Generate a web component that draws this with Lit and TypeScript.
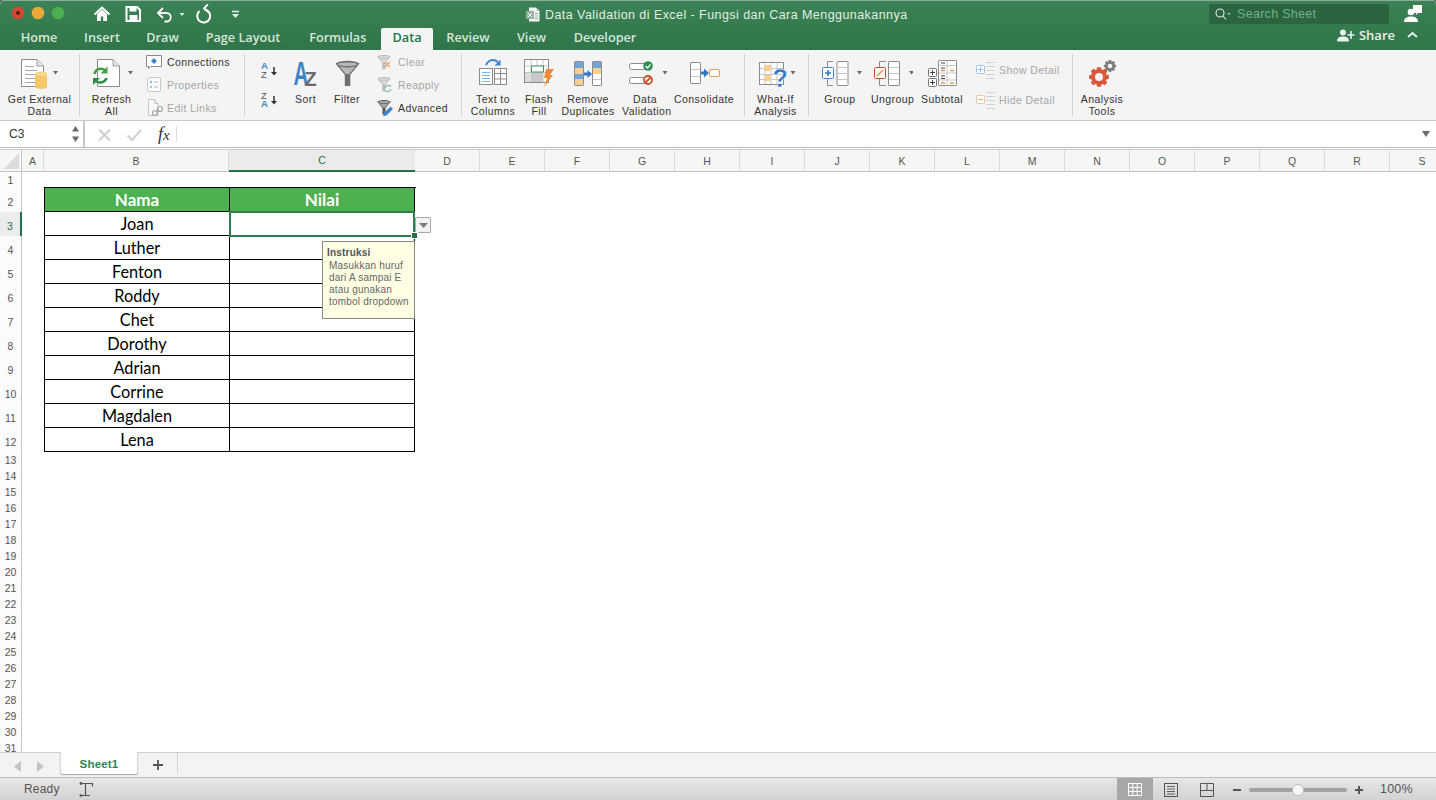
import { LitElement, html, css, svg } from "lit";
import { customElement } from "lit/decorators.js";

const GREY = "#8c8c8c";
const caret = (x: number, y: number, c = "#6a6a6a") => svg`<path d="M${x} ${y}h5l-2.5 3.6z" fill="${c}"/>`;
const doc = (x: number, y: number, w: number, h: number, f: number, c = GREY, fill = "#fff") => svg`
  <path d="M${x + .5} ${y + .5}H${x + w - f}L${x + w - .5} ${y + f}V${y + h - .5}H${x + .5}Z" fill="${fill}" stroke="${c}"/>
  <path d="M${x + w - f} ${y + .5}V${y + f}H${x + w - .5}" fill="#e6e6e6" stroke="${c}" stroke-width=".8"/>`;
const gear = (cx: number, cy: number, r: number, hole: number, fill: string, teeth = 8) => {
  let d = "";
  const rin = r * 0.74;
  for (let i = 0; i < teeth; i++) {
    const a = (i / teeth) * Math.PI * 2;
    const s = Math.PI / teeth;
    const p = (ang: number, rad: number) => `${(cx + Math.cos(ang) * rad).toFixed(2)} ${(cy + Math.sin(ang) * rad).toFixed(2)}`;
    d += `${i ? "L" : "M"}${p(a - s * 0.95, rin)}L${p(a - s * 0.45, r)}L${p(a + s * 0.45, r)}L${p(a + s * 0.95, rin)}`;
  }
  d += "Z";
  return svg`<path d="${d}" fill="${fill}"/><circle cx="${cx}" cy="${cy}" r="${hole}" fill="#f4f4f4"/>`;
};
const funnel = (x: number, y: number, s: number, op = 1, c1 = "#b9b9b9", c2 = "#6e6e6e") => svg`
  <g opacity="${op}">
    <path d="M${x} ${y + 1.5 * s}C${x + 3 * s} ${y - .6 * s} ${x + 11 * s} ${y - .6 * s} ${x + 14 * s} ${y + 1.5 * s}L${x + 8.6 * s} ${y + 8 * s}V${y + 14.5 * s}H${x + 5.4 * s}V${y + 8 * s}Z" fill="${c2}"/>
    <ellipse cx="${x + 7 * s}" cy="${y + 1.9 * s}" rx="${5.6 * s}" ry="${1 * s}" fill="${c1}"/>
    <path d="M${x + 2.4 * s} ${y + 3.2 * s}Q${x + 7 * s} ${y + 4.4 * s} ${x + 11.6 * s} ${y + 3.2 * s}L${x + 8 * s} ${y + 7.6 * s}H${x + 6 * s}Z" fill="${c1}"/>
  </g>`;
const colBlock = (x: number) => svg`
  <rect x="${x + .5}" y="61.5" width="11" height="24" fill="#fff" stroke="${GREY}" rx=".6"/>
  <path d="M${x + 1} 67.5h10M${x + 1} 73.5h10M${x + 1} 79.5h10" stroke="#c6c6c6"/>`;

type Big = { x: number; w: number; label: string[]; icon: any };
type Small = { label: string; off?: boolean; icon: any };

const bigs: Record<string, Big> = {
  ext: { x: 0, w: 79, label: ["Get External", "Data"], icon: svg`
    ${doc(21, 59, 23, 28, 7)}
    <path d="M25 66.500h9M25 70.500h12M25 74.500h10M25 78.500h10M25 82.500h10" stroke="#a8a8a8"/>
    <path d="M35 74c0-3 12-3 12 0v13c0 2.500-12 2.500-12 0z" fill="#f6c667"/>
    <ellipse cx="41" cy="74" rx="6" ry="1.800" fill="#f9d98f"/>
    <path d="M38 78h.8M42 80h.8M39 83h.8M44 84h.8M44 77h.8" stroke="#fbe7b6"/>
    ${caret(53, 71)}` },
  refresh: { x: 80, w: 63, label: ["Refresh", "All"], icon: svg`
    ${doc(97, 59, 23, 28, 7)}
    <path d="M94.500 74a6.500 6 0 0 1 11.500-3" fill="none" stroke="#43a047" stroke-width="2.600"/>
    <path d="M107.500 66.500v7h-7z" fill="#43a047"/>
    <path d="M106.500 78a6.500 6 0 0 1-10.500 3" fill="none" stroke="#2e8b44" stroke-width="2.600"/>
    <path d="M93 85v-7h7z" fill="#2e8b44"/>
    ${caret(128, 71)}` },
  sort: { x: 285, w: 41, label: ["Sort"], icon: svg`
    <text transform="translate(293.500 85) scale(.62 1)" font-family="Liberation Sans" font-weight="700" font-size="33" fill="#3f83c9">A</text>
    <text x="304.500" y="85.500" font-family="Liberation Sans" font-weight="700" font-size="20" fill="#6b6b6b">Z</text>` },
  filter: { x: 326, w: 42, label: ["Filter"], icon: funnel(335.500, 61, 1.72) },
  ttc: { x: 462, w: 62, label: ["Text to", "Columns"], icon: svg`
    <path d="M486 65c3-6 8-6 12-3" fill="none" stroke="#3f83c9" stroke-width="2"/>
    <path d="M500.500 59.500v6h-6z" fill="#3f83c9"/>
    <rect x="479.500" y="68.500" width="13" height="16" fill="#fff" stroke="${GREY}"/>
    <path d="M482 72.500h8M482 75.500h8M482 78.500h8M482 81.500h8" stroke="#7fb2e5"/>
    <rect x="494.500" y="68.500" width="12" height="16" fill="#fff" stroke="${GREY}"/>
    <path d="M495 73.500h11M495 79h11M500.500 69v15" stroke="${GREY}"/>` },
  flash: { x: 524, w: 30, label: ["Flash", "Fill"], icon: svg`
    <rect x="524.500" y="59.500" width="24" height="23" fill="#fff" stroke="${GREY}"/>
    <path d="M525 66h23M525 72.500h23M531 60v22M537 60v22M543 60v22" stroke="#c6c6c6"/>
    <rect x="525" y="73" width="6" height="9" fill="#dcdcdc"/><rect x="531" y="73" width="12" height="9" fill="#c8c8c8"/>
    <rect x="531.500" y="66" width="12" height="6" fill="#fff" stroke="#3c9a5f"/>
    <path d="M546 69h8l-4 6h3l-9 12 3-9h-3z" fill="#ee8b3a"/>` },
  dup: { x: 554, w: 68, label: ["Remove", "Duplicates"], icon: svg`
    <rect x="574.500" y="61.500" width="9" height="24" fill="#fff" stroke="${GREY}" rx=".6"/>
    <rect x="575" y="62" width="8" height="6" fill="#6ea6dc"/><rect x="575" y="68" width="8" height="6" fill="#f8cf8f"/>
    <rect x="575" y="74" width="8" height="5.500" fill="#6ea6dc"/><rect x="575" y="79.500" width="8" height="5.500" fill="#f8cf8f"/>
    <path d="M584 72.500h3.500v-2.500l4.500 4-4.500 4v-2.500H584z" fill="#2f78c4"/>
    <rect x="592.500" y="61.500" width="9" height="24" fill="#fff" stroke="${GREY}" rx=".6"/>
    <rect x="593" y="62" width="8" height="6" fill="#6ea6dc"/><rect x="593" y="68" width="8" height="6" fill="#f8cf8f"/>
    <path d="M593 79.500h8" stroke="#c6c6c6"/>` },
  dv: { x: 622, w: 46, label: ["Data", "Validation"], icon: svg`
    <rect x="629.500" y="63.500" width="17" height="6" rx="2" fill="#fff" stroke="${GREY}"/>
    <rect x="629.500" y="77.500" width="17" height="6" rx="2" fill="#fff" stroke="${GREY}"/>
    <circle cx="648" cy="66" r="4.800" fill="#2f8f4e"/>
    <path d="M645.500 66l2 2 3-3.500" fill="none" stroke="#fff" stroke-width="1.300"/>
    <circle cx="648" cy="80" r="4" fill="#fff" stroke="#cf4a2c" stroke-width="1.800"/>
    <path d="M645.500 82.500l5-5" stroke="#cf4a2c" stroke-width="1.800"/>
    ${caret(662.500, 71)}` },
  cons: { x: 668, w: 72, label: ["Consolidate"], icon: svg`
    <rect x="690.500" y="62.500" width="10" height="21" fill="#fff" stroke="${GREY}" rx=".6"/>
    <path d="M691 69.500h9M691 76.500h9" stroke="#c6c6c6"/>
    <path d="M701 71.500h3v-3l5 4.500-5 4.500v-3h-3z" fill="#2f78c4"/>
    <rect x="709.500" y="69.500" width="10" height="7" rx="1.500" fill="#fff" stroke="#ea9a52"/>` },
  whatif: { x: 745, w: 61, label: ["What-If", "Analysis"], icon: svg`
    <rect x="759.500" y="62.500" width="24" height="22" fill="#fff" stroke="${GREY}"/>
    <path d="M760 68.500h23M760 74.500h23M760 79.500h23M765 63v21M771 63v21M777 63v21" stroke="#c6c6c6"/>
    <rect x="764.500" y="65" width="6" height="6" fill="#f8cf8f"/><rect x="764.500" y="75" width="6" height="6" fill="#f8cf8f"/>
    <text x="772.500" y="86.500" font-family="Liberation Sans" font-weight="700" font-size="25" fill="#2f78c4" stroke="#f4f4f4" stroke-width=".4">?</text>
    ${caret(790.500, 71)}` },
  group: { x: 809, w: 62, label: ["Group"], icon: svg`
    <path d="M833 61.500h-5.500V67M827.500 79v6.500H833" fill="none" stroke="${GREY}"/>
    <rect x="822.500" y="67.500" width="11" height="11" rx="1" fill="#fff" stroke="#3f83c9"/>
    <path d="M825 73h6M828 70v6" stroke="#2f78c4" stroke-width="1.600"/>
    ${colBlock(836.500)}
    ${caret(857, 71)}` },
  ungroup: { x: 871, w: 42, label: ["Ungroup"], icon: svg`
    <path d="M886 61.500h-6.500V67M879.500 79v6.500H886" fill="none" stroke="${GREY}"/>
    <rect x="874.500" y="67.500" width="11" height="11" rx="1" fill="#fff" stroke="#cf4a2c"/>
    <path d="M877 76l6-6" stroke="#ee8b3a" stroke-width="1.400"/>
    ${colBlock(888)}
    ${caret(909, 71)}` },
  subtotal: { x: 913, w: 58, label: ["Subtotal"], icon: svg`
    <rect x="938.500" y="60.500" width="18" height="25" rx=".6" fill="#fff" stroke="${GREY}"/>
    <path d="M939 65.500h17M939 73h17M939 80h17M947 61v25" stroke="#c6c6c6"/>
    <path d="M941 63h4M941 68h4M941 76h4M941 78.500h4" stroke="#444"/>
    <path d="M941 70.500h4M950 70.500h4M941 83h4M950 83h4" stroke="#ee9a4a" stroke-width="1.400"/>
    <rect x="928.500" y="68.500" width="8" height="8" rx="1" fill="#fff" stroke="#777"/>
    <rect x="928.500" y="78.500" width="8" height="8" rx="1" fill="#fff" stroke="#777"/>
    <path d="M930 72.500h5M932.500 70v5M930 82.500h5M932.500 80v5" stroke="#444"/>` },
  tools: { x: 1073, w: 58, label: ["Analysis", "Tools"], icon: svg`
    ${gear(1099, 77, 10, 4, "#d9583a")}
    ${gear(1110, 66, 6.200, 2.300, "#7d7d7d")}` },
};

const smallRows: Record<string, Small[]> = {
  data: [
    { label: "Connections", icon: svg`
      <path d="M146.500 5.500h15v11h-11l-2 2v-2h-2z" fill="#fff" stroke="#8a8a8a"/>
      <path d="M154 8l3 3-3 3-3-3z" fill="#3f83c9"/>` },
    { label: "Properties", off: true, icon: svg`
      <rect x="147.500" y="4.500" width="13" height="14" rx="1" fill="#fafafa" stroke="#c8c8c8"/>
      <path d="M150 9h2" stroke="#8fbbe8" stroke-width="2"/><path d="M154 9h4M154 14h4" stroke="#bdbdbd"/><path d="M150 14h2" stroke="#bdbdbd" stroke-width="2"/>` },
    { label: "Edit Links", off: true, icon: svg`
      <path d="M148.500 3.500h6l3.500 4v12h-9.500z" fill="#fafafa" stroke="#c4c4c4"/>
      <path d="M154.500 3.500v4h3.500" fill="none" stroke="#c4c4c4"/>
      <circle cx="155" cy="17" r="2.500" fill="#f4f4f4" stroke="#a6a6a6" stroke-width="1.200"/>
      <circle cx="160" cy="13" r="2.500" fill="#f4f4f4" stroke="#a6a6a6" stroke-width="1.200"/>
      <path d="M156 16l3-2.500" stroke="#a6a6a6" stroke-width="1.200"/>` },
  ],
  filter: [
    { label: "Clear", off: true, icon: svg`${funnel(377, 5, .98, .42)}<path d="M385 12l5 5M390 12l-5 5" stroke="#e8a468" stroke-width="1.300"/>` },
    { label: "Reapply", off: true, icon: svg`${funnel(377, 4, .98, .42)}<path d="M385 15a3.500 3.500 0 0 1 6-1.500M391 16a3.500 3.500 0 0 1-6 1.500" fill="none" stroke="#85c2a0" stroke-width="1.200"/>` },
    { label: "Advanced", icon: svg`${funnel(377, 4, 1, 1, "#a8a8a8", "#5f5f5f")}<path d="M384 17l6.500-6.500 2.500 2.500-6.500 6.500-3.300.8z" fill="#3f83c9"/>` },
  ],
};

const detail: Small[] = [
  { label: "Show Detail", off: true, icon: svg`
    <rect x="976.500" y="10.500" width="8" height="8" rx="1" fill="#fff" stroke="#9cc3ea"/>
    <path d="M978 14.500h5M980.500 12v5" stroke="#9cc3ea"/>
    <path d="M986 7.500h9M986 11.500h9M986 15.500h9M986 19.500h9M986 23.500h9" stroke="#d2d2d2"/>` },
  { label: "Hide Detail", off: true, icon: svg`
    <rect x="976.500" y="10.500" width="8" height="8" rx="1" fill="#fff" stroke="#f0c49a"/>
    <path d="M978 14.500h5" stroke="#eab182"/>
    <path d="M986 7.500h9M986 11.500h9M986 15.500h9M986 19.500h9M986 23.500h9" stroke="#d2d2d2"/>` },
];

const tabs: [string, number][] = [["Home", 63], ["Insert", 63], ["Draw", 58], ["Page Layout", 103], ["Formulas", 86.500], ["Data", 52], ["Review", 70], ["View", 57], ["Developer", 90]];
const columns: [string, number][] = [["A", 22], ["B", 185], ["C", 186], ...("DEFGHIJKLMNOPQRS".split("").map((c) => [c, 65] as [string, number]))];
const people = ["Joan", "Luther", "Fenton", "Roddy", "Chet", "Dorothy", "Adrian", "Corrine", "Magdalen", "Lena"];

@customElement("app-root")
export class AppRoot extends LitElement {
  static styles = css`
    :host { display: block; width: 1436px; height: 800px; overflow: hidden; background: #5d6d64; font-family: "Liberation Sans", Arial, sans-serif; color: #333; }
    .win { display: flex; flex-direction: column; height: 800px; overflow: hidden; border-radius: 5px 5px 0 0; background: #fff; }
    svg { display: block; flex: none; }

    .head { height: 50px; flex: none; background: linear-gradient(#3b8256, #2f7549); display: flex; flex-direction: column; border-top: 1px solid #8fa99a; box-sizing: border-box; }
    .titlebar { height: 27px; flex: none; position: relative; display: flex; align-items: center; }
    .tb-icons { width: 240px; height: 27px; flex: none; }
    .title { flex: 1; display: flex; align-items: center; gap: 5px; padding-left: 286px; color: #e2eee6; font-size: 12.5px; letter-spacing: .44px; white-space: nowrap; }
    .search { width: 180px; height: 20px; flex: none; box-sizing: border-box; margin-top: -2px; background: #2a6540; border-radius: 3px; display: flex; align-items: center; gap: 6px; padding-left: 6px; color: #74b08c; font-size: 12.5px; letter-spacing: .3px; }
    .user { margin-left: 15px; margin-right: 14px; margin-top: -4px; }
    .tabline { height: 22px; flex: none; display: flex; padding-left: 7.5px; font-family: "Open Sans", sans-serif; font-size: 12.7px; font-weight: 600; color: #d6e6dc; }
    .tab { display: flex; align-items: center; justify-content: center; white-space: nowrap; flex: none; box-sizing: border-box; padding-bottom: 4px; }
    .tab.on { background: #f4f4f4; color: #217346; border-radius: 2px 2px 0 0; }
    .share { margin-left: auto; align-self: flex-start; height: 14px; display: flex; align-items: center; gap: 4px; padding-right: 18px; }
    .share span { font-size: 13px; color: #e8f1eb; }

    .ribbon { height: 70px; flex: none; background: #f4f4f4; border-bottom: 1px solid #c9c9c9; box-sizing: content-box; display: flex; align-items: flex-start; font-size: 10.5px; letter-spacing: .42px; color: #333; }
    .sep { width: 1px; height: 62px; margin-top: 4px; background: #d2d2d2; flex: none; }
    .big { flex: none; display: flex; flex-direction: column; }
    .lbl { margin-top: 1px; line-height: 12px; text-align: center; white-space: nowrap; }
    .pad { flex: none; }
    .stack { flex: none; display: flex; flex-direction: column; margin-top: 0; }
    .row { display: flex; align-items: center; height: 23px; white-space: nowrap; }
    .stack.tall { margin-top: 5px; }
    .stack.tall .row { height: 30px; }
    .off { color: #a6a6a6; }

    .fbar { height: 26px; flex: none; display: flex; background: #fff; border-bottom: 1px solid #bdbdbd; }
    .name { width: 85px; flex: none; box-sizing: border-box; padding-left: 9px; display: flex; align-items: center; font-size: 12px; color: #333; position: relative; border-right: 2px solid #c8c8c8; }
    .spin { margin-left: auto; margin-right: 3px; }
    .fx-icons { flex: none; }
    .fx { flex: none; width: 18px; padding: 3px 0 0 3px; font-family: "Liberation Serif", serif; font-style: italic; font-size: 18px; color: #333; }
    .fx span { font-size: 15px; }
    .fx-sep { width: 1px; height: 16px; margin-top: 5px; background: #dedede; flex: none; }
    .finput { flex: 1; display: flex; align-items: center; justify-content: flex-end; padding-right: 5px; }

    .cols { height: 24px; flex: none; box-sizing: border-box; border-top: 1px solid #fff; box-shadow: inset 0 1px 0 #c9c9c9; display: flex; background: #f6f6f6; border-bottom: 1px solid #c4c4c4; padding-top: 1px; font-size: 10.5px; color: #555; }
    .corner { width: 22px; flex: none; border-right: 1px solid #c4c4c4; box-sizing: border-box; }
    .col { flex: none; box-sizing: border-box; display: flex; align-items: center; justify-content: center; border-right: 1px solid #dcdcdc; }
    .col.on { color: #217346; background: #ebebeb; border-bottom: 2px solid #217346; margin-bottom: -1px; border-right: 0; }

    .sheet { flex: 1; min-height: 0; display: flex; overflow: hidden; }
    .rows { width: 22px; flex: none; box-sizing: border-box; border-right: 1px solid #c4c4c4; background: #fbfbfb; font-size: 10.5px; color: #555; }
    .rn { display: flex; align-items: center; justify-content: center; height: 16px; box-sizing: border-box; }
    .rn.t { height: 24px; padding-top: 4px; }
    .rn.on { color: #217346; background: #ececec; border-right: 2px solid #217346; margin-right: -1px; }
    .cells { flex: 1; position: relative; }
    .table { margin: 15px 0 0 22px; width: 371px; display: grid; grid-template-columns: 185px 185px; border-left: 1px solid #000; border-top: 1px solid #000; font-family: Lato, sans-serif; font-size: 16.3px; color: #000; }
    .c { height: 24px; box-sizing: border-box; border-right: 1px solid #000; border-bottom: 1px solid #000; display: flex; align-items: center; justify-content: center; }
    .c.h { background: #4eb151; color: #fff; font-weight: 700; font-size: 17px; }
    .sel { position: absolute; left: 207px; top: 39px; width: 186px; height: 26px; box-sizing: border-box; border: 2px solid #2f7d4f; }
    .handle { position: absolute; left: 390px; top: 61px; width: 5px; height: 5px; background: #217346; border: 1px solid #fff; box-sizing: content-box; margin: -1px 0 0 -1px; }
    .dd { position: absolute; left: 393px; top: 45px; width: 16px; height: 16px; box-sizing: border-box; background: #f2f2f2; border: 1px solid #ababab; border-radius: 1px; display: flex; align-items: center; justify-content: center; }
    .tip { position: absolute; left: 300px; top: 69px; width: 93px; height: 78px; box-sizing: border-box; background: #ffffe4; border: 1px solid #8a8a8a; padding: 5px 0 0 4px; font-family: "Liberation Sans", sans-serif; font-size: 10px; letter-spacing: .2px; color: #666; }
    .tip b { display: block; line-height: 12px; color: #555; }
    .tip div { margin: 1px 0 0 2px; line-height: 12px; white-space: nowrap; }

    .sheets { height: 26px; flex: none; box-sizing: border-box; background: #f3f3f3; border-top: 1px solid #cfcfcf; border-bottom: 1px solid #bdbdbd; display: flex; align-items: flex-start; }
    .nav { width: 60px; height: 24px; flex: none; }
    .stab { width: 78px; height: 22px; margin-top: -1px; padding-top: 2px; box-sizing: border-box; flex: none; background: #fff; border-radius: 0 0 3px 3px; box-shadow: 0 1px 1px #a5a5a5; border-left: 1px solid #d8d8d8; border-right: 1px solid #d8d8d8; color: #2e8554; font-weight: 700; font-size: 11.5px; letter-spacing: .2px; display: flex; align-items: center; justify-content: center; }
    .plus { width: 39px; height: 21px; flex: none; border-right: 1px solid #d4d4d4; }

    .status { height: 22px; flex: none; background: linear-gradient(#e7e7e7, #d2d2d2); display: flex; align-items: center; font-size: 12px; letter-spacing: .2px; color: #555; padding-left: 24px; }
    .ready { width: 55px; flex: none; }
    .active { margin-left: auto; width: 36px; height: 22px; background: #a7a7a7; display: flex; align-items: center; justify-content: center; flex: none; }
    .views { flex: none; }
    .pct { width: 56px; flex: none; font-size: 12.5px; letter-spacing: .2px; }
  `;

  private bigItem(b: Big) {
    return html`<div class="big" style="width:${b.w}px">
      <svg width="${b.w}" height="42" viewBox="${b.x} 50 ${b.w} 42">${b.icon}</svg>
      <div class="lbl">${b.label.map((l, i) => (i ? html`<br />${l}` : l))}</div>
    </div>`;
  }

  private stack(items: Small[], x: number, w: number, width: number, tall = false) {
    const h = tall ? 30 : 23;
    return html`<div class="stack ${tall ? "tall" : ""}" style="width:${width}px">
      ${items.map((it) => html`<div class="row ${it.off ? "off" : ""}">
        <svg width="${w}" height="${h}" viewBox="${x} 0 ${w} ${h}">${it.icon}</svg>${it.label}
      </div>`)}
    </div>`;
  }

  render() {
    return html`<div class="win">
      <div class="head">
        <div class="titlebar">
          <svg class="tb-icons" viewBox="0 1 240 27">
            <circle cx="18" cy="13" r="6.300" fill="#d2492f"/><circle cx="18" cy="13" r="2" fill="#5a1a10"/>
            <circle cx="38" cy="13" r="6.300" fill="#e9a93a"/><circle cx="58" cy="13" r="6.300" fill="#4bb04f"/>
            <path d="M94.500 14.500L102 7.500l7.500 7" fill="none" stroke="#fff" stroke-width="2"/>
            <path d="M97 14v7h3.800v-4.500h2.400V21H107v-7l-5-4.500z" fill="#fff"/>
            <path d="M126.500 7h10.500l3 3v11h-13.500z" fill="none" stroke="#fff" stroke-width="2"/>
            <path d="M129.500 7.500h7v4h-7zM129.500 15h8v6h-8z" fill="#fff"/>
            <path d="M163 8l-5 5 5 5" fill="none" stroke="#fff" stroke-width="1.800"/>
            <path d="M158.500 13h8a4.200 4.200 0 0 1 0 8.500h-2" fill="none" stroke="#fff" stroke-width="1.800"/>
            <path d="M179.500 13h5l-2.500 3z" fill="#e6efe9"/>
            <path d="M200 10.500a6.500 6.500 0 1 0 5-1.500" fill="none" stroke="#fff" stroke-width="2" transform="translate(-.5 .5)"/>
            <path d="M209.500 7.500h-5.500v5.500" fill="none" stroke="#fff" stroke-width="1.800" transform="rotate(-45 204 9) translate(.5 1)"/>
            <path d="M232 11.500h7" stroke="#e6efe9" stroke-width="1.400"/><path d="M232 14h7l-3.500 4z" fill="#e6efe9"/>
          </svg>
          <div class="title">
            <svg width="14" height="15" viewBox="0 0 14 15">
              <path d="M3 .5h7l3.500 3.500v10.500H3z" fill="#f2f6f3"/><path d="M10 .5V4h3.500" fill="#c9d6ce"/>
              <rect x="0" y="4" width="8" height="8" fill="#8fb39d"/><path d="M2 6l4 4M6 6l-4 4" stroke="#fff"/>
              <path d="M9 6.500h3M9 9h3M9 11.500h3" stroke="#8fa99a"/>
            </svg>Data Validation di Excel - Fungsi dan Cara Menggunakannya
          </div>
          <div class="search">
            <svg width="16" height="12" viewBox="0 0 16 12"><circle cx="5" cy="5" r="4" fill="none" stroke="#e2eee6" stroke-width="1.100"/><path d="M8 8l3 3.500" stroke="#e2eee6" stroke-width="1.100"/><path d="M12.500 5l1.500 1.500L15.500 5" fill="none" stroke="#e2eee6"/></svg>Search Sheet
          </div>
          <svg class="user" width="18" height="18" viewBox="0 0 18 18">
            <path d="M9 1h9v8h-4l-2 2V9H9z" fill="#fff"/>
            <circle cx="7" cy="8" r="3.300" fill="#fff"/>
            <path d="M0 18c0-4 3-5.500 7-5.500s7 1.500 7 5.500z" fill="#fff"/>
          </svg>
        </div>
        <div class="tabline">
          ${tabs.map(([t, w]) => html`<div class="tab ${t === "Data" ? "on" : ""}" style="width:${w}px">${t}</div>`)}
          <div class="share">
            <svg width="18" height="13" viewBox="0 0 18 13"><circle cx="6" cy="3.500" r="3" fill="#e8f1eb"/><path d="M0 12.500c0-4 2.500-5 6-5s6 1 6 5z" fill="#e8f1eb"/><path d="M14 2v8M10.500 6h7" stroke="#e8f1eb" stroke-width="1.600"/></svg>
            <span>Share</span>
            <svg style="margin-left:8px" width="11" height="8" viewBox="0 0 11 8"><path d="M1 6l4.500-4L10 6" fill="none" stroke="#e8f1eb" stroke-width="1.800"/></svg>
          </div>
        </div>
      </div>

      <div class="ribbon">
        ${this.bigItem(bigs.ext)}
        <div class="sep"></div>
        ${this.bigItem(bigs.refresh)}
        <div class="pad" style="width:3px"></div>
        ${this.stack(smallRows.data, 146, 21, 98)}
        <div class="sep"></div>
        <svg width="40" height="66" viewBox="245 50 40 66">
          <text x="261" y="69" font-family="Liberation Sans" font-size="9.500" font-weight="700" fill="#3f83c9">A</text>
          <text x="261" y="78" font-family="Liberation Sans" font-size="9.500" fill="#555">Z</text>
          <path d="M274 67v6" stroke="#333" stroke-width="1.500"/><path d="M271 72h6l-3 3.500z" fill="#333"/>
          <text x="261" y="99" font-family="Liberation Sans" font-size="9.500" fill="#555">Z</text>
          <text x="261" y="107" font-family="Liberation Sans" font-size="9.500" font-weight="700" fill="#3f83c9">A</text>
          <path d="M274 96v6" stroke="#333" stroke-width="1.500"/><path d="M271 101h6l-3 3.500z" fill="#333"/>
        </svg>
        ${this.bigItem(bigs.sort)}
        ${this.bigItem(bigs.filter)}
        <div class="pad" style="width:9px"></div>
        ${this.stack(smallRows.filter, 377, 21, 84)}
        <div class="sep"></div>
        ${this.bigItem(bigs.ttc)}
        ${this.bigItem(bigs.flash)}
        ${this.bigItem(bigs.dup)}
        ${this.bigItem(bigs.dv)}
        ${this.bigItem(bigs.cons)}
        <div class="pad" style="width:4px"></div>
        <div class="sep"></div>
        ${this.bigItem(bigs.whatif)}
        <div class="pad" style="width:2px"></div>
        <div class="sep"></div>
        ${this.bigItem(bigs.group)}
        ${this.bigItem(bigs.ungroup)}
        ${this.bigItem(bigs.subtotal)}
        <div class="pad" style="width:5px"></div>
        ${this.stack(detail, 976, 23, 96, true)}
        <div class="sep"></div>
        ${this.bigItem(bigs.tools)}
      </div>

      <div class="fbar">
        <div class="name">C3
          <svg class="spin" width="9" height="20" viewBox="0 0 9 20"><path d="M1 7.500L4.500 2 8 7.500zM1 12.500L4.500 18 8 12.500z" fill="#6a6a6a"/></svg>
        </div>
        <svg class="fx-icons" width="70" height="26" viewBox="85 121 70 26">
          <path d="M99 129.500l11 11M110 129.500l-11 11" stroke="#cfcfcf" stroke-width="2"/>
          <path d="M127.500 135.500l4.500 4.500 9-10" fill="none" stroke="#cfcfcf" stroke-width="2"/>
        </svg>
        <div class="fx">f<span>x</span></div>
        <div class="fx-sep"></div>
        <div class="finput"><svg width="9" height="6" viewBox="0 0 9 6"><path d="M0 0h8l-4 6z" fill="#6a6a6a"/></svg></div>
      </div>

      <div class="cols">
        <div class="corner"><svg width="21" height="22" viewBox="0 0 21 22"><path d="M19 3v16H4z" fill="#dcdcdc"/></svg></div>
        ${columns.map(([c, w]) => html`<div class="col ${c === "C" ? "on" : ""}" style="width:${w}px">${c}</div>`)}
      </div>

      <div class="sheet">
        <div class="rows">
          ${Array.from({ length: 31 }, (_, i) => i + 1).map((n) => html`<div class="rn ${n >= 2 && n <= 12 ? "t" : ""} ${n === 3 ? "on" : ""}">${n}</div>`)}
        </div>
        <div class="cells">
          <div class="table">
            <div class="c h">Nama</div><div class="c h">Nilai</div>
            ${people.map((p) => html`<div class="c">${p}</div><div class="c"></div>`)}
          </div>
          <div class="sel"></div>
          <div class="dd"><svg width="9" height="5" viewBox="0 0 9 5"><path d="M0 0h9L4.500 5z" fill="#7a7a7a"/></svg></div>
          <div class="handle"></div>
          <div class="tip"><b>Instruksi</b><div>Masukkan huruf<br />dari A sampai E<br />atau gunakan<br />tombol dropdown</div></div>
        </div>
      </div>

      <div class="sheets">
        <svg class="nav" width="60" height="24" viewBox="0 752 60 24">
          <path d="M21 760v11l-7-5.500z" fill="#c4c4c4"/><path d="M37 760v11l7-5.500z" fill="#c4c4c4"/>
        </svg>
        <div class="stab">Sheet1</div>
        <svg class="plus" width="39" height="21" viewBox="138 753 39 21"><path d="M153 765h10M158 760v10" stroke="#555" stroke-width="1.800"/></svg>
      </div>

      <div class="status">
        <div class="ready">Ready</div>
        <svg width="16" height="15" viewBox="1 0 16 15">
          <circle cx="3" cy="1.500" r="1.400" fill="#555"/><path d="M3 1.500h11.500v3M7.500 2v11.500M1.500 13.500h7.500M12 13.500h-3" fill="none" stroke="#555" stroke-width="1.200"/><circle cx="3" cy="13.500" r="1.300" fill="#555"/>
        </svg>
        <div class="active">
          <svg width="14" height="13" viewBox="0 0 14 13"><path d="M.5.500h13v12H.5zM.5 4.500h13M.5 8.500h13M4.800.5v12M9.200.5v12" fill="none" stroke="#fff"/></svg>
        </div>
        <svg class="views" width="227" height="22" viewBox="1153 778 227 22">
          <rect x="1164.500" y="783.500" width="13" height="13" fill="none" stroke="#555"/><path d="M1167 786.500h8M1167 789h8M1167 791.500h8M1167 794h8" stroke="#555" stroke-width=".9"/>
          <path d="M1200.500 783.500h13v13h-13zM1207 783.500v7h-6.500M1207 790.500h6.500" fill="none" stroke="#555"/>
          <path d="M1233 790h8" stroke="#555" stroke-width="2"/>
          <rect x="1249" y="788" width="98" height="4" rx="2" fill="#a3a3a3"/>
          <circle cx="1298" cy="790" r="5.500" fill="#f7f7f7" stroke="#b5b5b5" stroke-width=".8"/>
          <path d="M1355 790h8M1359 786v8" stroke="#555" stroke-width="2"/>
        </svg>
        <div class="pct">100%</div>
      </div>
    </div>`;
  }
}
